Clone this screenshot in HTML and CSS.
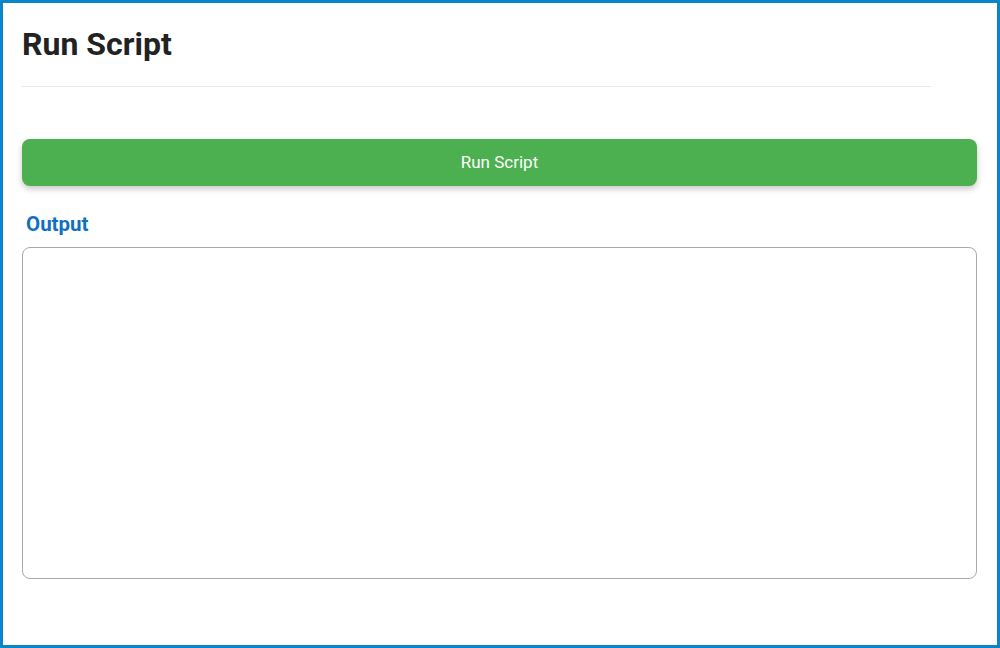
FILE: index.html
```html
<!DOCTYPE html>
<html lang="en">
<head>
<meta charset="utf-8">
<title>Run Script</title>
<link rel="stylesheet" href="styles.css">
</head>
<body>
<div class="frame">
  <div class="header">
    <h1 class="title">Run Script</h1>
  </div>
  <button class="run-btn" type="button">Run Script</button>
  <h2 class="output-label">Output</h2>
  <div class="output-box"></div>
</div>
</body>
</html>
```
FILE: styles.css
```css
* { box-sizing: border-box; }
html, body { margin: 0; padding: 0; }
body {
  width: 1000px;
  height: 648px;
  font-family: Roboto, "Liberation Sans", Arial, sans-serif;
  background: #ffffff;
}
.frame {
  width: 1000px;
  height: 648px;
  border: 3px solid #0a85c9;
  padding: 0 20px 0 19px;
  display: flex;
  flex-direction: column;
  background: #fff;
}
.header {
  width: 909px;
  border-bottom: 1.5px solid #e7e7e7;
  padding-top: 23px;
  height: 83.5px;
}
.title {
  margin: 0;
  font-size: 32px;
  line-height: 37px;
  font-weight: 700;
  color: #222222;
}
.run-btn {
  margin-top: 52px;
  height: 47px;
  width: 955px;
  border: none;
  border-radius: 8px;
  background: #4caf50;
  color: #ffffff;
  font-family: Roboto, "Liberation Sans", Arial, sans-serif;
  font-size: 17px;
  box-shadow: 0 3px 6px rgba(0,0,0,0.22);
  padding: 0;
}
.output-label {
  margin: 25px 0 0 4px;
  font-size: 20.5px;
  line-height: 26px;
  font-weight: 700;
  color: #0f6fc1;
}
.output-box {
  margin-top: 10px;
  width: 955px;
  height: 332px;
  border: 1.5px solid #a9a9a9;
  border-radius: 8px;
  background: #fff;
}
```
